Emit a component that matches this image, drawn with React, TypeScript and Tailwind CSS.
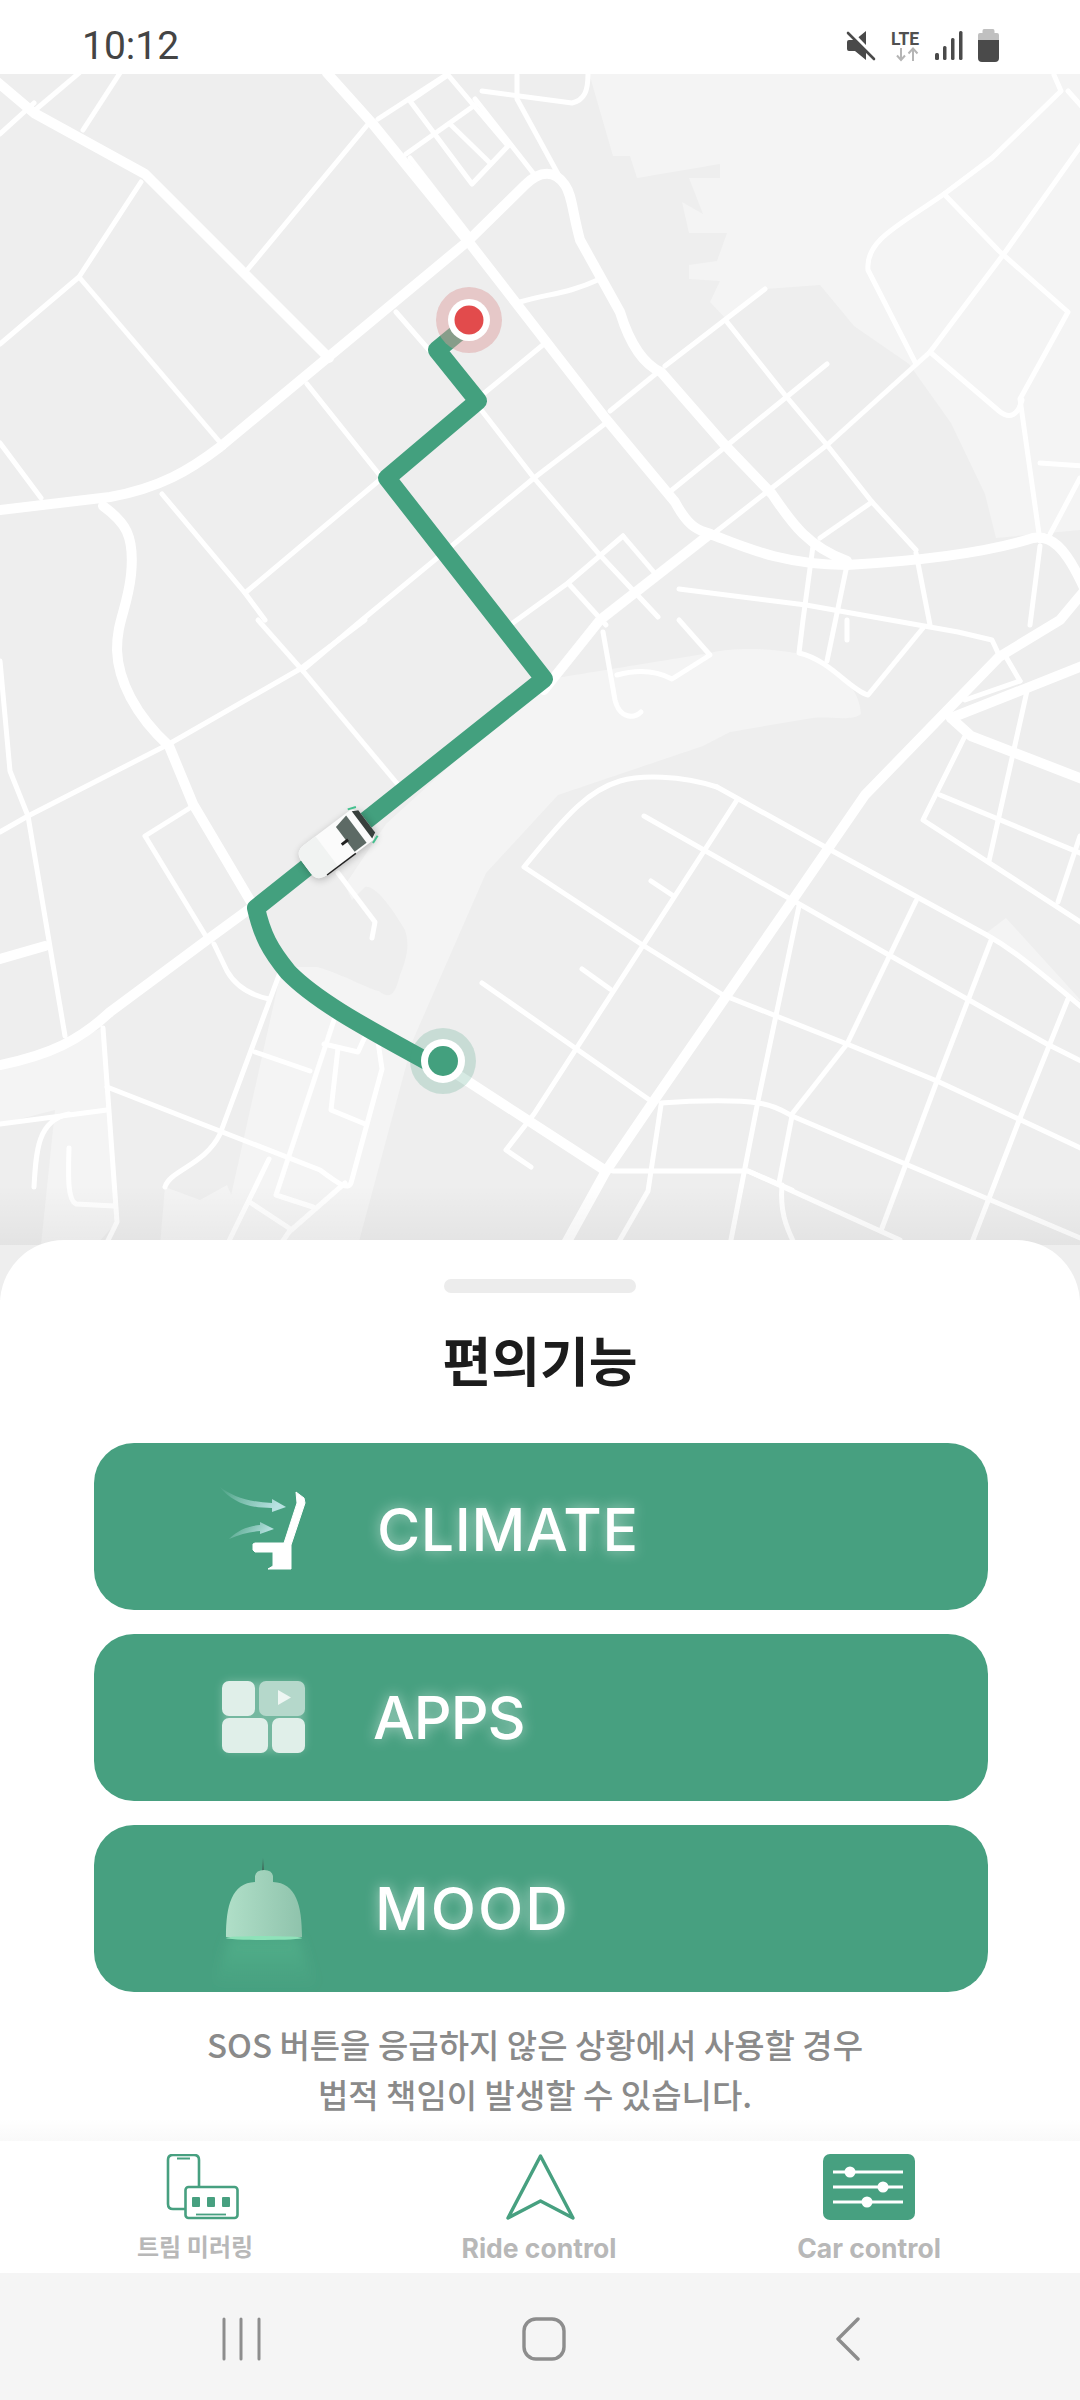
import React from "react";

const thick: string[] = [
  "M-5 80L34 113L145 174L329 358",
  "M0 510L110 497C160 488 190 470 220 447L468 241L525 185C540 170 555 170 565 185C572 195 572 210 580 240L620 312C630 345 645 365 661 372L723 443L772 494C790 520 805 545 847 561",
  "M327 73L372 123L468 241L606 419L675 502C690 530 700 530 710 534C740 545 780 565 847 565C900 562 980 555 1033 538C1050 535 1065 545 1085 590",
  "M710 534L600 620L544 690",
  "M103 506C125 522 135 535 131 575C127 610 117 620 117 650C118 680 135 715 169 746L193 804L251 902",
  "M248 910L207 940L110 1012C80 1040 50 1055 0 1065",
  "M455 1073L606 1171L565 1245",
  "M606 1171L651 1105L792 901L865 795L999 657L1060 620L1085 590",
  "M951 718L1085 665",
  "M951 718L971 736L1085 780",
  "M0 959L45 946",
];

const thin: string[] = [
  "M141 182L79 277L0 344","M79 277L224 447","M83 130L120 73","M34 111L79 73","M0 134L34 103",
  "M248 269L369 123","M396 312L482 411L534 478L599 554L658 617","M307 384L382 478L245 593","M162 494L245 593L265 620",
  "M544 344L482 395","M534 478L606 423","M534 478L362 620L305 668","M0 443L41 498",
  "M448 75L410 101L472 184L508 146L448 75","M378 119L446 75","M406 154L475 105","M410 158L468 233","M451 125L489 162",
  "M475 99L537 178","M482 91L572 103C585 100 588 90 588 74","M517 99L558 174","M517 75L517 95",
  "M520 302C550 293 565 295 600 279",
  "M765 289L665 366","M727 322L785 395L827 445L872 502L916 550","M610 411L658 372","M827 364L730 443L672 490","M827 445L713 534","M930 352L827 445","M872 502L820 538",
  "M623 536L568 583L510 625","M623 536L658 577","M568 583L606 625","M679 589L806 605L958 632L992 640L999 655",
  "M1054 75L1061 91L992 158L944 194C900 225 865 240 868 270L916 364","M944 194L999 251L1068 312L1020 399L1040 541","M1085 140L1006 251L930 352",
  "M930 352L999 411C1010 420 1018 415 1022 400","M1068 91L1085 110","M1040 463L1085 466","M1080 478L1047 540",
  "M813 546L803 620L799 653C830 660 850 690 868 695L923 628","M847 565L827 661","M916 553L930 625","M1040 546L1030 625",
  "M303 671L400 787","M300 669L169 744L28 816L0 832","M300 669L365 620","M258 620L303 671","M0 661L10 771L28 816L65 1036",
  "M214 944L227 971C235 985 250 995 269 999","M103 1028L117 1222L96 1265","M0 1124L107 1110",
  "M107 1087L320 1170C340 1185 348 1190 351 1183L382 1069L376 1028","M282 967L220 1134C205 1165 170 1170 165 1187","M338 1008L276 1195L313 1207","M255 1052L310 1071","M324 1044L358 1052L369 1028","M338 1048L331 1110L365 1124",
  "M345 1183L289 1232L280 1245","M269 1159L227 1245","M251 1203L289 1228","M69 1148C68 1180 68 1200 76 1204L114 1206","M34 1187C36 1150 38 1120 69 1114",
  "M338 873L375 922L372 938","M193 806L145 836L207 938",
  "M717 787C680 775 640 775 620 781C590 790 570 810 524 867L641 944L723 995L847 1044L937 1081L1085 1150",
  "M717 787L827 848L985 934C1005 945 1020 955 1085 1010","M737 800L534 1114L506 1150L531 1167","M644 816L889 955L1047 1044L1085 1063","M651 881L672 895","M582 969L610 989","M482 983L651 1101",
  "M799 906L758 1101L730 1245","M916 901L847 1044L792 1114","M992 938L937 1081L882 1228","M1068 999L1020 1118L971 1245",
  "M661 1103C700 1100 740 1100 758 1103C775 1105 785 1112 792 1116L1085 1240","M748 1171L900 1240","M613 1171L748 1171L792 1190","M661 1105L648 1191L617 1245","M792 1116L779 1183","M782 1185C780 1210 785 1225 795 1245",
  "M847 620L847 640","M679 620L710 655L672 679C655 670 635 670 617 675","M603 632L615 700C620 720 635 718 641 712",
  "M965 736L923 820L1085 925","M940 795L1085 855","M1027 691L989 861","M1080 836L1058 902","M1006 657L1020 681","M965 700L1020 681",
];

const Map = () => (
  <svg viewBox="0 74 1080 1226" className="block w-[1080px] h-[1226px] shrink-0">
    <defs>
      <linearGradient id="fade" x1="0" y1="0" x2="0" y2="1">
        <stop offset="0" stopColor="#000" stopOpacity="0" />
        <stop offset="1" stopColor="#000" stopOpacity="0.045" />
      </linearGradient>
      <filter id="carShadow" x="-30%" y="-50%" width="160%" height="200%">
        <feGaussianBlur stdDeviation="4" />
      </filter>
    </defs>
    <rect x="0" y="74" width="1080" height="1226" fill="#eeeeee" />
    <path fill="#f4f4f4" d="M589 73L613 156L630 156L637 178L720 164L720 178L689 178L703 214L682 202L689 233L727 233L717 261L689 265L689 279L720 281L710 302L727 320L765 289L820 285L854 326L909 364L951 423L985 494L996 538L1080 530L1080 73Z" />
    <path fill="#f4f4f4" d="M710 653C740 645 790 650 813 657C840 670 860 690 861 714C850 722 830 716 813 718L730 732L703 746L558 795L486 873L413 1040L358 1245L220 1245L282 967L317 967C345 975 370 990 379 991C390 1000 395 995 400 975C410 950 408 940 405 930C390 905 375 885 365 887L352 900L345 885L386 824L544 680Z" />
    <path fill="#f4f4f4" d="M0 1065L103 1028L117 1222L96 1245L41 1245L55 1110L0 1124Z" />
    <path fill="#f4f4f4" d="M165 1187L200 1200L227 1185L240 1215L225 1245L160 1245Z" />
    <path fill="#f4f4f4" d="M985 934L1006 918L1085 1005Z" />
    <g fill="none" stroke="#fff" strokeLinecap="round" strokeLinejoin="round">
      {thin.map((d, i) => <path key={i} d={d} strokeWidth="5" />)}
      {thick.map((d, i) => <path key={i} d={d} strokeWidth="10" />)}
    </g>
    <rect x="0" y="1185" width="1080" height="60" fill="url(#fade)" />
    <path d="M471 322L437 350L478 401L387 478L544 679L256 908C262 935 270 950 288 972C320 1005 380 1035 441 1069" fill="none" stroke="#43a07e" strokeWidth="18" strokeLinejoin="round" />
    <circle cx="469" cy="320" r="33" fill="#dc9a9a" fillOpacity="0.45" />
    <circle cx="469" cy="320" r="21" fill="#fff" />
    <circle cx="469" cy="320" r="14.5" fill="#e24b4c" />
    <circle cx="443" cy="1061" r="33" fill="#43a07e" fillOpacity="0.22" />
    <circle cx="443" cy="1061" r="22" fill="#fff" />
    <circle cx="443" cy="1061" r="15" fill="#43a07e" />
    <g transform="translate(338 843) rotate(-37)">
      <rect x="-40" y="-16" width="76" height="36" rx="9" fill="#000" opacity="0.28" filter="url(#carShadow)" />
      <path d="M-40 -8Q-40 -19 -28 -19L30 -19L36 -14L36 14L30 19L-28 19Q-40 19 -40 8Z" fill="#fbfbfb" />
      <path d="M-40 -6L-40 8Q-40 19 -28 19L-14 19L-14 -19L-28 -19Q-40 -19 -40 -6Z" fill="#f1f3f2" />
      <path d="M-28 19L8 19" stroke="#222" strokeWidth="1.5" />
      <path d="M8 -14L23 -17L23 17L8 17Z" fill="#5d6a65" />
      <path d="M30 -17L36 -14L36 14L30 17Z" fill="#38403d" />
      <rect x="2" y="2" width="8" height="3" fill="#222" />
      <path d="M28 -21L36 -18" stroke="#43c08e" strokeWidth="2" />
      <path d="M28 21L36 18" stroke="#43c08e" strokeWidth="2" />
    </g>
  </svg>
);

const StatusIcons = () => (
  <svg viewBox="845 28 157 36" className="w-[157px] h-[36px]">
    <path d="M847 42Q847 40 849 40L855 40L866 31L866 60L855 51L849 51Q847 51 847 49Z" fill="#4a4a4a" />
    <path d="M847 29L877 60" stroke="#fff" strokeWidth="5" />
    <path d="M848 33L874 59" stroke="#4a4a4a" strokeWidth="2.6" strokeLinecap="round" />
    <text x="891" y="44.5" fontSize="17.5" fontWeight="700" fill="#505050" fontFamily="Roboto, sans-serif">LTE</text>
    <path d="M901 48V60M897 55.5L901 60L905 55.5M913 61V49M908.5 53.5L913 48.5L917.5 53.5" fill="none" stroke="#b5b5b5" strokeWidth="2" />
    <g fill="#4a4a4a">
      <rect x="935" y="53" width="4" height="7" rx="1.5" />
      <rect x="943" y="46" width="3.5" height="14" rx="1.5" />
      <rect x="951" y="38" width="3.5" height="22" rx="1.5" />
      <rect x="959" y="31" width="3.5" height="29" rx="1.5" />
    </g>
    <path d="M984 29H993Q994.5 29 994.5 31V33H997Q999 33 999 35V40H978V35Q978 33 980 33H982.5V31Q982.5 29 984 29Z" fill="#c0c0c0" />
    <path d="M978 40H999V58Q999 62 995 62H982Q978 62 978 58Z" fill="#4a4a4a" />
  </svg>
);

const ClimateIcon = () => (
  <svg viewBox="212 1443 160 167" className="h-full w-[160px] shrink-0">
    <defs>
      <linearGradient id="a1" x1="0" y1="0" x2="1" y2="0.3">
        <stop offset="0" stopColor="#b5e0e0" stopOpacity="0" />
        <stop offset="1" stopColor="#b9e2e2" />
      </linearGradient>
    </defs>
    <path d="M219 1486C232 1497 250 1502 272 1503L272 1499L286 1507L272 1512L272 1508C250 1508 232 1503 219 1486Z" fill="url(#a1)" />
    <path d="M229 1539C238 1530 248 1526 260 1525L260 1522L274 1529L260 1534L260 1531C250 1532 240 1534 229 1539Z" fill="url(#a1)" />
    <path d="M296 1492L304 1498L305 1503L303 1509L291 1545V1569H268L273 1566V1552H255L253 1550V1544L255 1543H284L297 1503Z" fill="#fff" stroke="#fff" strokeWidth="1" strokeLinejoin="round" />
  </svg>
);

const AppsIcon = () => (
  <svg viewBox="212 1634 160 167" className="h-full w-[160px] shrink-0">
    <defs>
      <filter id="g2" x="-20%" y="-20%" width="140%" height="140%"><feGaussianBlur stdDeviation="4" /></filter>
    </defs>
    <rect x="222" y="1681" width="83" height="71" rx="8" fill="#fff" opacity="0.25" filter="url(#g2)" />
    <rect x="222" y="1681" width="33" height="35" rx="7" fill="#e0efe9" />
    <rect x="259" y="1681" width="46" height="35" rx="7" fill="#b5d8cb" />
    <rect x="222" y="1718" width="46" height="35" rx="7" fill="#e0efe9" />
    <rect x="272" y="1718" width="33" height="35" rx="7" fill="#e0efe9" />
    <path d="M278 1690L291 1697.5L278 1705Z" fill="#eef6f3" />
  </svg>
);

const MoodIcon = () => (
  <svg viewBox="212 1825 160 167" className="h-full w-[160px] shrink-0">
    <defs>
      <linearGradient id="l1" x1="0" y1="0" x2="1" y2="0">
        <stop offset="0" stopColor="#b0dfc8" />
        <stop offset="1" stopColor="#8fc3ac" />
      </linearGradient>
      <linearGradient id="l2" x1="0" y1="0" x2="0" y2="1">
        <stop offset="0" stopColor="#5fc397" stopOpacity="0.4" />
        <stop offset="1" stopColor="#5fc397" stopOpacity="0" />
      </linearGradient>
      <linearGradient id="l3" x1="0" y1="0" x2="0" y2="1">
        <stop offset="0" stopColor="#47a080" />
        <stop offset="1" stopColor="#3f6a5a" />
      </linearGradient>
      <filter id="g3" x="-30%" y="-30%" width="160%" height="160%"><feGaussianBlur stdDeviation="6" /></filter>
    </defs>
    <rect x="262" y="1858" width="2" height="13" fill="url(#l3)" />
    <path d="M230 1938L212 1988H316L298 1938Z" fill="url(#l2)" filter="url(#g3)" />
    <path d="M226 1937C226 1905 232 1883 255 1882L255 1876Q256 1870 264 1870Q272 1870 273 1876L273 1882C296 1883 302 1905 302 1937Z" fill="url(#l1)" />
    <ellipse cx="264" cy="1938" rx="38" ry="2" fill="#8ee2b9" />
  </svg>
);

const Option = ({ icon, label, offset }: { icon: React.ReactNode; label: string; offset: string }) => (
  <div className="flex h-[167px] w-[894px] items-center rounded-[40px] bg-[#47a080] pl-[118px]">
    {icon}
    <span className={`${offset} text-[59px] font-medium leading-none text-white [text-shadow:0_0_14px_rgba(255,255,255,0.55)]`} style={{ fontFamily: "Inter, sans-serif" }}>
      {label}
    </span>
  </div>
);

const Tab = ({ label, view, className, labelClass, children }: { label: string; view: string; className: string; labelClass: string; children: React.ReactNode }) => (
  <div className={`flex w-[300px] flex-col items-center pt-[13px] ${className}`}>
    <svg viewBox={view} className="h-[66px] w-[100px]">{children}</svg>
    <span className={`mt-[10px] font-bold leading-[36px] text-[#b8b8b8] ${labelClass}`} style={{ fontFamily: "Inter, 'Noto Sans CJK KR', sans-serif" }}>{label}</span>
  </div>
);

export default function App() {
  return (
    <div className="flex h-[2400px] w-[1080px] flex-col overflow-hidden bg-white" style={{ fontFamily: "'Noto Sans CJK KR', sans-serif" }}>
      <div className="flex h-[74px] shrink-0 items-center justify-between pl-[82px] pr-[78px] pt-[18px]">
        <span className="text-[39px] leading-none text-[#444]" style={{ fontFamily: "Roboto, sans-serif" }}>10:12</span>
        <StatusIcons />
      </div>
      <Map />
      <div className="relative -mt-[60px] flex h-[901px] shrink-0 flex-col items-center rounded-t-[64px] bg-white pt-[39px]">
        <div className="h-[14px] w-[192px] rounded-full bg-[#ececec]" />
        <h1 className="mt-[36px] text-[53px] font-bold leading-[60px] text-[#1c1c1c]">편의기능</h1>
        <div className="mt-[54px] flex flex-col gap-[24px] pl-[2px]">
          <Option icon={<ClimateIcon />} label="CLIMATE" offset="ml-[5px] tracking-[0.6px] translate-y-[3px]" />
          <Option icon={<AppsIcon />} label="APPS" offset="ml-[1px] tracking-[-1px]" />
          <Option icon={<MoodIcon />} label="MOOD" offset="ml-[3px] tracking-[2px]" />
        </div>
        <p className="mt-[27px] pr-[10px] text-center text-[33px] font-medium leading-[50px] text-[#8a8a8a]">
          SOS 버튼을 응급하지 않은 상황에서 사용할 경우
          <br />
          법적 책임이 발생할 수 있습니다.
        </p>
        <div className="mt-auto h-[22px] w-full bg-gradient-to-b from-white to-[#f9f9f9]" />
      </div>
      <div className="flex h-[132px] shrink-0 bg-white">
        <Tab label="트림 미러링" view="145 2154 100 66" className="ml-[45px]" labelClass="text-[24px]">
          <g fill="none" stroke="#47a080" strokeWidth="2.6">
            <path d="M185 2209H173Q168 2209 168 2204V2160Q168 2155 173 2155H194Q199 2155 199 2160V2186" />
            <path d="M177 2158.5H190" strokeWidth="2" />
            <rect x="185.5" y="2187" width="52" height="31" rx="3" />
            <path d="M196 2214.5H226" strokeWidth="1.8" />
          </g>
          <g fill="#47a080">
            <rect x="192" y="2197" width="8" height="10" rx="1" />
            <rect x="207" y="2197" width="8" height="10" rx="1" />
            <rect x="222" y="2197" width="8" height="10" rx="1" />
          </g>
        </Tab>
        <Tab label="Ride control" view="489 2154 100 66" className="ml-[44px]" labelClass="text-[26.5px]">
          <path d="M540.5 2156L508 2218L540.5 2201L573 2218Z" fill="none" stroke="#47a080" strokeWidth="3.4" strokeLinejoin="round" />
        </Tab>
        <Tab label="Car control" view="819 2154 100 66" className="ml-[30px]" labelClass="text-[26.5px]">
          <rect x="823" y="2154" width="92" height="66" rx="7" fill="#47a080" />
          <g stroke="#fff" strokeWidth="3"><path d="M833 2172H903M833 2187H903M833 2202H903" /></g>
          <g fill="#fff">
            <ellipse cx="850" cy="2172" rx="5.5" ry="5.5" />
            <ellipse cx="883" cy="2187" rx="5.5" ry="5.5" />
            <ellipse cx="867" cy="2202" rx="5.5" ry="5.5" />
          </g>
        </Tab>
      </div>
      <div className="flex h-[127px] shrink-0 items-start bg-[#f5f5f5] pt-[44px]">
        <svg viewBox="220 2317 44 44" className="ml-[220px] h-[44px] w-[44px]">
          <path d="M224 2319V2359M241 2319V2359M259 2319V2359" stroke="#8d8d8d" strokeWidth="3" strokeLinecap="round" />
        </svg>
        <svg viewBox="520 2317 48 44" className="ml-[256px] h-[44px] w-[48px]">
          <rect x="524" y="2319" width="40" height="40" rx="12" fill="none" stroke="#8d8d8d" strokeWidth="3.4" />
        </svg>
        <svg viewBox="832 2317 32 44" className="ml-[264px] h-[44px] w-[32px]">
          <path d="M858 2319L838 2339L858 2359" fill="none" stroke="#8d8d8d" strokeWidth="3.4" strokeLinecap="round" strokeLinejoin="round" />
        </svg>
      </div>
    </div>
  );
}
